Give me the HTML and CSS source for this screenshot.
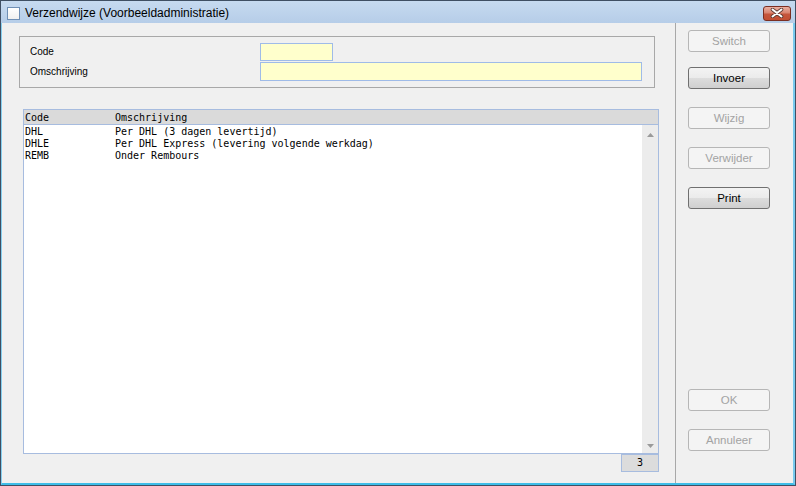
FILE: index.html
```html
<!DOCTYPE html>
<html lang="nl">
<head>
<meta charset="utf-8">
<title>Verzendwijze</title>
<link rel="stylesheet" href="styles.css">
</head>
<body>
<div class="window">
  <div class="titlebar">
    <span class="app-icon"></span>
    <span class="title">Verzendwijze (Voorbeeldadministratie)</span>
    <span class="close">
      <svg width="14" height="10" viewBox="0 0 14 10">
        <path d="M2.5 1.5 L11.5 8.5 M11.5 1.5 L2.5 8.5" stroke="#5a3a34" stroke-width="3.6" stroke-linecap="round"/>
        <path d="M2.5 1.5 L11.5 8.5 M11.5 1.5 L2.5 8.5" stroke="#ffffff" stroke-width="2" stroke-linecap="round"/>
      </svg>
    </span>
  </div>
  <div class="client">
    <div class="main">
      <div class="group">
        <span class="label">Code</span><span class="input code-input"></span>
        <span class="label">Omschrijving</span><span class="input desc-input"></span>
      </div>
      <div class="list">
        <div class="list-head"><span class="c1">Code</span><span>Omschrijving</span></div>
        <div class="list-body">
          <div class="rows">
            <div class="row"><span class="c1">DHL</span><span>Per DHL (3 dagen levertijd)</span></div>
            <div class="row"><span class="c1">DHLE</span><span>Per DHL Express (levering volgende werkdag)</span></div>
            <div class="row"><span class="c1">REMB</span><span>Onder Rembours</span></div>
          </div>
          <div class="scrollbar">
            <svg class="arrow" width="7" height="4" viewBox="0 0 7 4"><path d="M3.5 0 L7 4 L0 4 Z" fill="#9a9a9a"/></svg>
            <svg class="arrow" width="7" height="4" viewBox="0 0 7 4"><path d="M0 0 L7 0 L3.5 4 Z" fill="#9a9a9a"/></svg>
          </div>
        </div>
        <div class="status">3</div>
      </div>
    </div>
    <div class="side">
      <span class="btn disabled first">Switch</span>
      <span class="btn">Invoer</span>
      <span class="btn disabled">Wijzig</span>
      <span class="btn disabled">Verwijder</span>
      <span class="btn">Print</span>
      <span class="btn disabled push">OK</span>
      <span class="btn disabled">Annuleer</span>
    </div>
  </div>
</div>
</body>
</html>
```

FILE: styles.css
```css
* { box-sizing: border-box; }
html, body { margin: 0; padding: 0; background: #f0f0f0; }

.window {
  width: 796px;
  height: 486px;
  border: 1px solid #3f4f63;
  display: flex;
  flex-direction: column;
  font-family: "Liberation Sans", Arial, sans-serif;
  color: #000;
}

.titlebar {
  height: 22px;
  flex: none;
  display: flex;
  align-items: center;
  padding-left: 6px;
  background: linear-gradient(#c6daf0, #b6cde8);
}
.app-icon {
  width: 13px;
  height: 13px;
  border: 1px solid #6f8fb5;
  background: linear-gradient(#ffffff, #f0f0f0);
  margin-top: 2px;
}
.title {
  font-size: 12px;
  margin-left: 5px;
  margin-top: 1px;
  color: #000;
}
.close {
  margin-left: auto;
  margin-right: 4px;
  margin-top: 2px;
  width: 28px;
  height: 15px;
  border: 1px solid #7a2e22;
  border-radius: 3px;
  background: linear-gradient(#eab0a2 0%, #d98470 45%, #c5553c 55%, #c24f33 100%);
  display: flex;
  align-items: center;
  justify-content: center;
}

.client {
  flex: 1;
  display: flex;
  background: #f0f0f0;
  border-left: 1px solid #86d0f0;
  border-right: 2px solid #79caee;
  border-bottom: 2px solid #3dbde8;
}

.main {
  width: 673px;
  flex: none;
  padding: 13px 0 0 17px;
}

.group {
  width: 636px;
  height: 52px;
  border: 1px solid #a8a8a8;
  padding: 6px 0 0 10px;
  display: grid;
  grid-template-columns: 230px auto;
  grid-template-rows: 18px 19px;
  row-gap: 1px;
  align-items: center;
}
.label {
  font-size: 10px;
  line-height: 12px;
}
.input {
  display: block;
  height: 100%;
  border: 1px solid #9fbbe8;
  background: #ffffcc;
}
.code-input { width: 73px; }
.desc-input { width: 382px; }

.list {
  margin: 21px 0 0 4px;
  width: 636px;
  display: flex;
  flex-direction: column;
  font-family: "DejaVu Sans Mono", "Liberation Mono", monospace;
  font-size: 10px;
}
.c1 { width: 90px; flex: none; }
.list-head {
  height: 16px;
  display: flex;
  align-items: center;
  padding: 1px 0 0 1px;
  background: #dadada;
  border: 1px solid #a7bcdf;
  line-height: 13px;
}
.list-body {
  height: 329px;
  display: flex;
  background: #ffffff;
  border: 1px solid #a7bcdf;
  border-top: none;
}
.rows { flex: 1; padding: 1px 0 0 1px; }
.row { display: flex; height: 12px; line-height: 12px; }
.scrollbar {
  width: 16px;
  flex: none;
  background: #ececec;
  display: flex;
  flex-direction: column;
  justify-content: space-between;
  align-items: center;
  padding: 8px 0 5px 1px;
}
.status {
  align-self: flex-end;
  width: 38px;
  height: 18px;
  border: 1px solid #a7bcdf;
  background: #dcdcdc;
  text-align: center;
  line-height: 16px;
}

.side {
  flex: 1;
  border-left: 1px solid #a8a8a8;
  padding: 7px 0 32px 12px;
  display: flex;
  flex-direction: column;
  gap: 18px;
}
.btn {
  width: 82px;
  height: 22px;
  flex: none;
  border: 1px solid #707070;
  border-radius: 3px;
  background: linear-gradient(#f3f3f3 0%, #ebebeb 50%, #dddddd 51%, #cfcfcf 100%);
  font-size: 11.5px;
  line-height: 20px;
  text-align: center;
  color: #000;
}
.btn.disabled {
  border-color: #b6b6b6;
  background: #f4f4f4;
  color: #a3a3a3;
}
.btn.first { margin-bottom: -3px; }
.btn.push { margin-top: auto; }
```
